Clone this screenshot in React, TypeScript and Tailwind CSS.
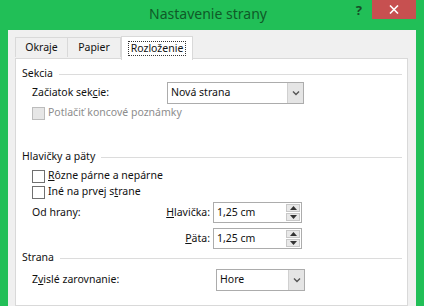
import React from 'react';

function GroupHeader({ title }: { title: string }) {
  return (
    <div className="flex items-center h-[16px] pr-[5px]">
      <span>{title}</span>
      <div className="flex-1 h-px bg-[#dcdcdc] ml-[6px] mt-px" />
    </div>
  );
}

function Checkbox({ disabled }: { disabled?: boolean }) {
  return (
    <div
      className={
        disabled
          ? 'w-[13px] h-[13px] border border-[#bcbcbc] bg-[#e6e6e6]'
          : 'w-[13px] h-[13px] border border-[#707070] bg-white'
      }
    />
  );
}

function Select({ value, width }: { value: string; width: string }) {
  return (
    <div className={`flex h-[22px] border border-[#acacac] bg-white ${width}`}>
      <div className="flex-1 flex items-center pl-[3px]">{value}</div>
      <div className="w-[16px] flex items-center justify-center bg-[#e5e5e5] border-l border-[#d0d0d0]">
        <svg width="8" height="6" viewBox="0 0 8 6">
          <path d="M1 1.5 L4 4.5 L7 1.5" fill="none" stroke="#555" strokeWidth="1.4" />
        </svg>
      </div>
    </div>
  );
}

function Spinner({ value }: { value: string }) {
  return (
    <div className="flex h-[21px] w-[89px] border border-[#acacac] bg-white">
      <div className="flex-1 flex items-center pl-[3px]">{value}</div>
      <div className="w-[15px] flex flex-col py-[1px] pr-[1px] gap-px">
        <div className="flex-1 flex items-center justify-center bg-[#e8e8e8] border border-[#c8c8c8]">
          <svg width="7" height="4" viewBox="0 0 7 4">
            <path d="M0 4 L3.5 0 L7 4 Z" fill="#333" />
          </svg>
        </div>
        <div className="flex-1 flex items-center justify-center bg-[#e8e8e8] border border-[#c8c8c8]">
          <svg width="7" height="4" viewBox="0 0 7 4">
            <path d="M0 0 L3.5 4 L7 0 Z" fill="#333" />
          </svg>
        </div>
      </div>
    </div>
  );
}

export default function App() {
  return (
    <div
      className="w-[424px] h-[306px] overflow-hidden bg-[#21bf57] flex flex-col text-[10.5px] text-[#111]"
      style={{ fontFamily: '"Noto Sans", sans-serif' }}
    >
      {/* title bar */}
      <div className="h-[30px] flex shrink-0">
        <div className="flex-1" />
        <div className="pt-[2px] text-[14px] text-[#0f5a28] leading-[24px]">Nastavenie strany</div>
        <div className="flex-1 flex justify-end items-start pr-[8px]">
          <div className="text-[13px] font-bold text-[#174d27] mt-[2px] mr-[10px] leading-[16px]">?</div>
          <div className="w-[44px] h-[19px] bg-[#c75050] flex items-center justify-center">
            <svg width="10" height="9" viewBox="0 0 10 9">
              <path d="M1 0.5 L9 8.5 M9 0.5 L1 8.5" stroke="#fff" strokeWidth="1.6" />
            </svg>
          </div>
        </div>
      </div>

      {/* client */}
      <div className="flex-1 mx-[8px] bg-[#f0f0f0] pl-[7px] pr-[8px] pt-[6px] flex flex-col">
        <div className="flex items-end h-[22px]">
          <div className="w-[53px] h-[20px] border border-[#d9d9d9] border-b-0 bg-[#f0f0f0] flex items-center justify-center mb-[1px]">
            Okraje
          </div>
          <div className="w-[53px] h-[20px] border border-[#d9d9d9] border-b-0 border-l-0 bg-[#f0f0f0] flex items-center justify-center mb-[1px]">
            Papier
          </div>
          <div className="relative z-10 w-[72px] h-[24px] -mb-[2px] border border-[#d9d9d9] border-b-0 bg-white flex items-start justify-center pt-[4px]">
            <span className="border border-dotted border-[#333] px-[2px] leading-[13px]">Rozloženie</span>
          </div>
        </div>

        <div className="flex-1 border border-[#d9d9d9] bg-white pl-[6px] pt-[7px]">
          <GroupHeader title="Sekcia" />
          <div className="flex items-center h-[22px] pl-[10px]">
            <div className="w-[135px]">
              Začiatok sek<span className="underline">c</span>ie:
            </div>
            <Select value="Nová strana" width="w-[137px]" />
          </div>
          <div className="flex items-center h-[18px] pl-[10px] text-[#8d8d8d]">
            <Checkbox disabled />
            <span className="ml-[3px]">Potlačiť koncové poznámky</span>
          </div>

          <div className="mt-[27px]">
            <GroupHeader title="Hlavičky a päty" />
          </div>
          <div className="mt-[3px] flex items-center h-[16px] pl-[10px]">
            <Checkbox />
            <span className="ml-[3px]">
              <span className="underline">R</span>ôzne párne a nepárne
            </span>
          </div>
          <div className="flex items-center h-[16px] pl-[10px]">
            <Checkbox />
            <span className="ml-[3px]">
              Iné na prvej s<span className="underline">t</span>rane
            </span>
          </div>
          <div className="mt-[2px] grid grid-cols-[181px_auto] gap-y-[5px] pl-[10px] items-center">
            <div className="flex justify-between pr-[3px]">
              <span>Od hrany:</span>
              <span>
                <span className="underline">H</span>lavička:
              </span>
            </div>
            <Spinner value="1,25 cm" />
            <div className="flex justify-end pr-[3px]">
              <span>
                <span className="underline">P</span>äta:
              </span>
            </div>
            <Spinner value="1,25 cm" />
          </div>

          <div className="mt-[1px]">
            <GroupHeader title="Strana" />
          </div>
          <div className="mt-[3px] flex items-center h-[22px] pl-[10px]">
            <div className="w-[184px]">
              Z<span className="underline">v</span>islé zarovnanie:
            </div>
            <Select value="Hore" width="w-[89px]" />
          </div>
        </div>
      </div>
    </div>
  );
}
